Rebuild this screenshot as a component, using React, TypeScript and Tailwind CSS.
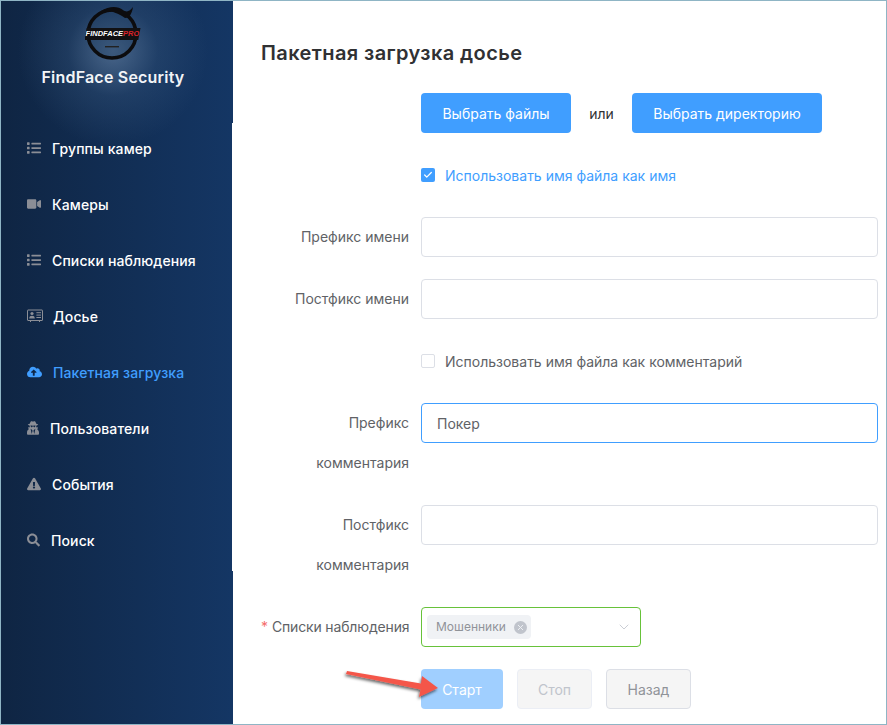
import React from "react";
import { FaList, FaVideo, FaCloudUploadAlt, FaUserSecret, FaExclamationTriangle, FaSearch } from "react-icons/fa";
import { LuChevronDown, LuCheck, LuX } from "react-icons/lu";

function CardIcon({ className }: { className?: string }) {
  return (
    <svg viewBox="0 0 16 13" className={className} fill="none">
      <rect x="0.5" y="0.5" width="15" height="10.5" rx="0.5" stroke="currentColor" strokeWidth="1" />
      <circle cx="5" cy="4" r="1.6" fill="currentColor" />
      <path d="M2.2 9 C2.2 6.8 3.4 6.2 5 6.2 C6.6 6.2 7.8 6.8 7.8 9 Z" fill="currentColor" />
      <path d="M9.4 3.2H14M9.4 5.6H14M9.4 8H14" stroke="currentColor" strokeWidth="1" />
      <path d="M3.5 11v1.5M12.5 11v1.5" stroke="currentColor" strokeWidth="1" />
    </svg>
  );
}

const items = [
  { t: "Группы камер", Icon: FaList, w: "w-[14px]", gap: "mr-[11px]", c: "text-white" },
  { t: "Камеры", Icon: FaVideo, w: "w-[14px]", gap: "mr-[11px]", c: "text-white" },
  { t: "Списки наблюдения", Icon: FaList, w: "w-[14px]", gap: "mr-[11px]", c: "text-white" },
  { t: "Досье", Icon: CardIcon, w: "w-[16px]", gap: "mr-[10px]", c: "text-white" },
  { t: "Пакетная загрузка", Icon: FaCloudUploadAlt, w: "w-[15px]", gap: "mr-[11px]", c: "text-[#409eff]" },
  { t: "Пользователи", Icon: FaUserSecret, w: "w-[12px]", gap: "mr-[11px]", c: "text-white" },
  { t: "События", Icon: FaExclamationTriangle, w: "w-[14px]", gap: "mr-[11px]", c: "text-white" },
  { t: "Поиск", Icon: FaSearch, w: "w-[13px]", gap: "mr-[11px]", c: "text-white" },
];

function Logo() {
  return (
    <div className="relative w-[56px] h-[56px]">
      <svg viewBox="0 0 56 56" className="absolute inset-0 w-full h-full">
        <circle cx="27" cy="30" r="24" fill="#1f3a5c" fillOpacity="0.3" stroke="#0c0c0e" strokeWidth="3.6" />
        <path d="M16 7 C 24 2, 33 2, 38 6 C 42 9, 45 7, 48 3 C 47 9, 45 14, 40 14 C 34 10, 26 6, 16 7 Z" fill="#0c0c0e" />
        <rect x="20" y="42" width="14" height="1.4" fill="#222" />
      </svg>
      <div className="absolute left-0 top-[24px] w-[56px] h-[12px] bg-[#111113] flex items-center justify-center [clip-path:polygon(4%_0,100%_0,96%_100%,0_100%)]">
        <span className="font-['Liberation_Sans',sans-serif] italic font-bold text-[7.5px] leading-none text-white">
          FINDFACE<span className="text-[#d8232a]">PRO</span>
        </span>
      </div>
    </div>
  );
}

function Row({ label, children, required, h }: { label?: React.ReactNode; children: React.ReactNode; required?: boolean; h?: boolean }) {
  return (
    <div className="flex mb-[22px]">
      <div className={"w-[160px] pr-3 text-right text-[14px] leading-[40px] text-[#606266] shrink-0 " + (h ? "pl-[40px]" : "whitespace-nowrap ") + (required ? "tracking-[-0.15px]" : "")}>
        {required && <span className="text-[#f56c6c] mr-[4px]">*</span>}
        {label}
      </div>
      <div className="flex-1 min-h-[40px]">{children}</div>
    </div>
  );
}

function Input({ value, focus }: { value?: string; focus?: boolean }) {
  return (
    <div className={"h-[40px] w-[457px] rounded border bg-white px-[15px] flex items-center text-[14px] text-[#606266] " + (focus ? "border-[#409eff]" : "border-[#dcdfe6]")}>
      {value}
    </div>
  );
}

export default function App() {
  return (
    <div className="relative w-[887px] h-[725px] overflow-hidden border border-[#8fb5c5] bg-white font-['Inter',sans-serif] flex">
      <aside className="w-[231px] shrink-0 h-full bg-[radial-gradient(circle_at_112px_50px,rgba(110,140,175,0.6)_0,rgba(70,105,145,0.26)_45px,rgba(30,60,100,0)_95px),linear-gradient(90deg,#0f2543_0%,#143664_100%)]">
        <div className="h-[120px] flex flex-col items-center pr-[7px]">
          <div className="mt-[3px] mr-[1px]"><Logo /></div>
          <div className="mt-[6px] text-[16px] leading-[22px] font-semibold tracking-[0.2px] text-[#f2f4f7]">FindFace Security</div>
        </div>
        <nav className="-mt-px">
          {items.map(({ t, Icon, w, gap, c }) => (
            <div key={t} className="h-[56px] pl-[26px] flex items-center">
              <Icon className={w + " " + gap + " h-[14px] shrink-0 " + (c === "text-white" ? "text-[#8b8e96]" : "text-[#409eff]")} />
              <span className={"text-[14px] font-medium tracking-[0.12px] " + c}>{t}</span>
            </div>
          ))}
        </nav>
      </aside>

      <div className="absolute left-[231px] top-0 w-px h-[122px] bg-[#143664]" />
      <div className="absolute left-[231px] top-[570px] w-px h-[155px] bg-[#143664]" />

      <main className="flex-1 pl-[29px] pt-[39px]">
        <h1 className="text-[20px] leading-[26px] font-semibold tracking-[0.4px] text-[#303133] mb-[27px]">Пакетная загрузка досье</h1>
        <Row>
          <div className="flex items-center">
            <div className="h-[40px] w-[150px] rounded bg-[#409eff] text-white text-[14px] flex items-center justify-center">Выбрать файлы</div>
            <span className="w-[61px] text-center text-[14px] text-[#303133]">или</span>
            <div className="h-[40px] w-[190px] rounded bg-[#409eff] text-white text-[14px] flex items-center justify-center">Выбрать директорию</div>
          </div>
        </Row>
        <Row>
          <div className="h-[40px] flex items-center">
            <span className="w-[14px] h-[14px] rounded-[2px] bg-[#409eff] flex items-center justify-center mr-[10px]">
              <LuCheck className="w-[10px] h-[10px] text-white" strokeWidth={3} />
            </span>
            <span className="text-[14px] text-[#409eff]">Использовать имя файла как имя</span>
          </div>
        </Row>
        <Row label="Префикс имени"><Input /></Row>
        <Row label="Постфикс имени"><Input /></Row>
        <Row>
          <div className="h-[40px] flex items-center">
            <span className="w-[14px] h-[14px] rounded-[2px] border border-[#dcdfe6] bg-white mr-[10px]" />
            <span className="text-[14px] text-[#606266]">Использовать имя файла как комментарий</span>
          </div>
        </Row>
        <Row label="Префикс комментария" h><Input value="Покер" focus /></Row>
        <Row label="Постфикс комментария" h><Input /></Row>
        <Row label="Списки наблюдения" required>
          <div className="h-[40px] w-[220px] rounded border border-[#67c23a] pl-[5px] pr-[8px] flex items-center justify-between">
            <span className="h-[24px] rounded bg-[#f0f2f5] pl-[9px] pr-[4px] flex items-center text-[12px] text-[#909399]">
              Мошенники
              <span className="ml-[8px] w-[13px] h-[13px] rounded-full bg-[#c0c4cc] flex items-center justify-center">
                <LuX className="w-[9px] h-[9px] text-[#f0f2f5]" strokeWidth={2.5} />
              </span>
            </span>
            <LuChevronDown className="w-[16px] h-[16px] text-[#c0c4cc]" strokeWidth={1.25} />
          </div>
        </Row>
        <Row>
          <div className="flex items-center">
            <div className="h-[40px] w-[82px] rounded bg-[#a0cfff] text-white text-[14px] flex items-center justify-center">Старт</div>
            <div className="ml-[14px] h-[40px] w-[75px] rounded border border-[#ebeef5] bg-[#f5f5f5] text-[#c0c4cc] text-[14px] flex items-center justify-center">Стоп</div>
            <div className="ml-[14px] h-[40px] w-[85px] rounded border border-[#dcdfe6] bg-[#f5f5f5] text-[#909399] text-[14px] flex items-center justify-center">Назад</div>
          </div>
        </Row>
      </main>

      <svg className="absolute left-[340px] top-[664px] w-[110px] h-[40px]" viewBox="0 0 110 40">
        <defs>
          <filter id="s" x="-10%" y="-40%" width="120%" height="200%">
            <feDropShadow dx="-1" dy="2" stdDeviation="1.5" floodColor="#000" floodOpacity="0.6" />
          </filter>
        </defs>
        <polygon points="6,6 80,18.5 81,11 97,23 78,32 79.5,24.5 5,9" fill="#f4574a" filter="url(#s)" />
      </svg>
    </div>
  );
}
